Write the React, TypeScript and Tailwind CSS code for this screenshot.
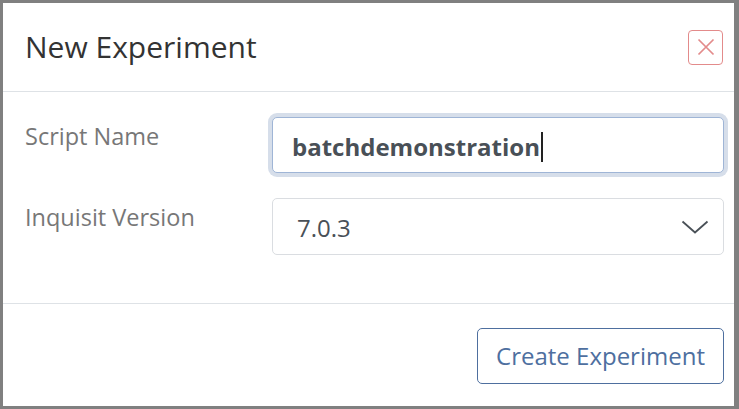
import { useState } from "react";

export default function App() {
  const [version, setVersion] = useState("7.0.3");
  const scriptName = "batchdemonstration";

  return (
    <div
      className="h-[409px] w-[739px] overflow-hidden bg-[#808080] pl-[3px] pt-[3px] pr-[5px] pb-[3px]"
      style={{ fontFamily: '"Open Sans", "Noto Sans", sans-serif' }}
    >
      <div className="flex h-full flex-col bg-white">
        <header className="flex h-[89px] items-center justify-between border-b border-[#dee2e6] pl-[22px] pr-[11px]">
          <h1 className="text-[30px] leading-none text-[#333333]">New Experiment</h1>
          <button
            type="button"
            aria-label="Close"
            className="flex h-[35px] w-[35px] items-center justify-center rounded-[4px] border-[1.5px] border-[#e38b8b] text-[#e38b8b]"
          >
            <svg width="18" height="18" viewBox="0 0 18 18" fill="none" stroke="currentColor" strokeWidth="1.7">
              <path d="M1.5 1.5 L16.5 16.5 M16.5 1.5 L1.5 16.5" />
            </svg>
          </button>
        </header>

        <div className="flex flex-col gap-[25px] border-b border-[#dee2e6] pb-[48px] pl-[22px] pr-[10px] pt-[25px]">
          <div className="grid grid-cols-[247px_1fr] items-start">
            <label className="pt-[3px] text-[23.5px] leading-[32px] text-[#777777]">Script Name</label>
            {/* focused field with caret */}
            <div className="flex h-[56px] w-full items-center rounded-[5px] border border-[#9fb5d6] bg-white px-[19px] pt-[3px] shadow-[0_0_0_4px_#d6deea]">
              <span className="text-[24px] font-bold text-[#495057]">{scriptName}</span>
              <span className="ml-[1px] h-[30px] w-[2.5px] bg-[#222222]" />
            </div>
          </div>
          <div className="grid grid-cols-[247px_1fr] items-start">
            <label className="pt-[3px] text-[23.5px] leading-[32px] text-[#777777]">Inquisit Version</label>
            <div className="relative">
              <select
                value={version}
                onChange={(e) => setVersion(e.target.value)}
                className="h-[57px] w-full appearance-none rounded-[5px] border border-[#dadde1] bg-white px-[24px] pt-[2px] text-[24px] text-[#495057] outline-none"
              >
                <option value="7.0.3">7.0.3</option>
                <option value="6.6.1">6.6.1</option>
                <option value="6.5.2">6.5.2</option>
              </select>
              <svg
                className="pointer-events-none absolute right-[15px] top-[22px]"
                width="28"
                height="14"
                viewBox="0 0 28 14"
                fill="none"
                stroke="#495057"
                strokeWidth="1.8"
              >
                <path d="M1.5 1.5 L14 12.5 L26.5 1.5" />
              </svg>
            </div>
          </div>
        </div>

        <footer className="flex justify-end pr-[10px] pt-[24px]">
          <button
            type="button"
            className="h-[56px] w-[247px] rounded-[5px] border border-[#4e6f9f] bg-white text-[24px] text-[#4e6f9f]"
          >
            Create Experiment
          </button>
        </footer>
      </div>
    </div>
  );
}
